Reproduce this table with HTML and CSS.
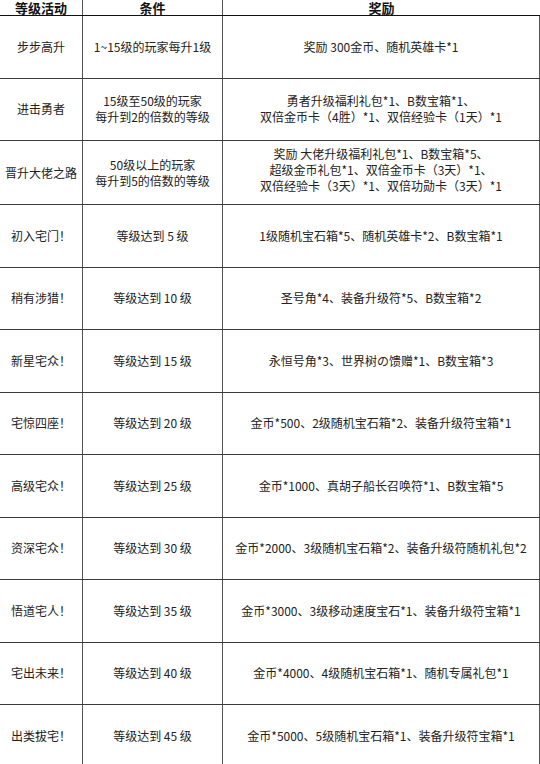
FILE: index.html
```html
<!DOCTYPE html>
<html lang="zh-CN">
<head>
<meta charset="utf-8">
<link rel="stylesheet" href="styles.css">
</head>
<body>
<div class="table">
  <div class="row head">
    <div class="c c1">等级活动</div>
    <div class="c c2">条件</div>
    <div class="c c3">奖励</div>
  </div>
  <div class="row">
    <div class="c c1">步步高升</div>
    <div class="c c2">1~15级的玩家每升1级</div>
    <div class="c c3">奖励 300金币、随机英雄卡*1</div>
  </div>
  <div class="row">
    <div class="c c1">进击勇者</div>
    <div class="c c2">15级至50级的玩家<br>每升到2的倍数的等级</div>
    <div class="c c3">勇者升级福利礼包*1、B数宝箱*1、<br>双倍金币卡（4胜）*1、双倍经验卡（1天）*1</div>
  </div>
  <div class="row tall">
    <div class="c c1">晋升大佬之路</div>
    <div class="c c2">50级以上的玩家<br>每升到5的倍数的等级</div>
    <div class="c c3 up">奖励 大佬升级福利礼包*1、B数宝箱*5、<br>超级金币礼包*1、双倍金币卡（3天）*1、<br>双倍经验卡（3天）*1、双倍功勋卡（3天）*1</div>
  </div>
  <div class="row">
    <div class="c c1">初入宅门！</div>
    <div class="c c2">等级达到 5 级</div>
    <div class="c c3">1级随机宝石箱*5、随机英雄卡*2、B数宝箱*1</div>
  </div>
  <div class="row">
    <div class="c c1">稍有涉猎！</div>
    <div class="c c2">等级达到 10 级</div>
    <div class="c c3">圣号角*4、装备升级符*5、B数宝箱*2</div>
  </div>
  <div class="row">
    <div class="c c1">新星宅众！</div>
    <div class="c c2">等级达到 15 级</div>
    <div class="c c3">永恒号角*3、世界树の馈赠*1、B数宝箱*3</div>
  </div>
  <div class="row">
    <div class="c c1">宅惊四座！</div>
    <div class="c c2">等级达到 20 级</div>
    <div class="c c3">金币*500、2级随机宝石箱*2、装备升级符宝箱*1</div>
  </div>
  <div class="row">
    <div class="c c1">高级宅众！</div>
    <div class="c c2">等级达到 25 级</div>
    <div class="c c3">金币*1000、真胡子船长召唤符*1、B数宝箱*5</div>
  </div>
  <div class="row">
    <div class="c c1">资深宅众！</div>
    <div class="c c2">等级达到 30 级</div>
    <div class="c c3">金币*2000、3级随机宝石箱*2、装备升级符随机礼包*2</div>
  </div>
  <div class="row">
    <div class="c c1">悟道宅人！</div>
    <div class="c c2">等级达到 35 级</div>
    <div class="c c3">金币*3000、3级移动速度宝石*1、装备升级符宝箱*1</div>
  </div>
  <div class="row">
    <div class="c c1">宅出未来！</div>
    <div class="c c2">等级达到 40 级</div>
    <div class="c c3">金币*4000、4级随机宝石箱*1、随机专属礼包*1</div>
  </div>
  <div class="row">
    <div class="c c1">出类拔宅！</div>
    <div class="c c2">等级达到 45 级</div>
    <div class="c c3">金币*5000、5级随机宝石箱*1、装备升级符宝箱*1</div>
  </div>
</div>
</body>
</html>
```

FILE: styles.css
```css
html, body {
  margin: 0;
  padding: 0;
  background: #ffffff;
}
body {
  width: 540px;
  height: 764px;
  overflow: hidden;
  font-family: "Noto Sans CJK SC", "Noto Sans", sans-serif;
  font-size: 12px;
  color: #222222;
}
.table {
  display: flex;
  flex-direction: column;
  width: 540px;
}
.row {
  display: grid;
  grid-template-columns: 83px 140px 317px;
  height: 62.5px;
  box-sizing: border-box;
  border-bottom: 1px solid #3a3a3a;
}
.row.tall {
  height: 64px;
}
.c {
  display: flex;
  align-items: center;
  justify-content: center;
  text-align: center;
  line-height: 16px;
  box-sizing: border-box;
  white-space: nowrap;
}
.c1, .c2 {
  border-right: 1px solid #555555;
}
.c3 {
  border-right: 1px solid #555555;
}
.c3.up {
  padding-bottom: 6px;
}
.head {
  height: 16px;
  border-bottom: 1px solid #111111;
}
.head .c {
  font-weight: 700;
  font-size: 13px;
  line-height: 15px;
  color: #111111;
}
.head .c3 {
  border-right: none;
}
```
